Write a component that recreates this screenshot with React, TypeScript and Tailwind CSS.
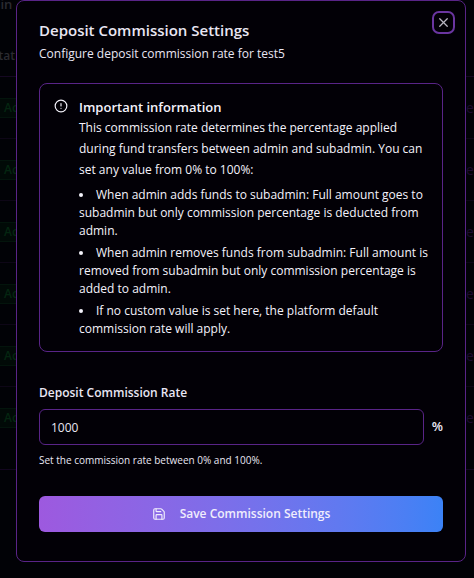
import { useState } from "react";
import { CircleAlert, Save, X } from "lucide-react";

const rows = ["r1", "r2", "r3", "r4", "r5", "r6"];

function SubadminTable() {
  return (
    <div aria-hidden="true" className="min-h-screen overflow-hidden bg-[#010206] text-sm">
      <p className="h-9 -indent-[12px] text-[13px] leading-2 font-semibold text-[#2b2b31]">min</p>
      <table className="w-full table-fixed border-collapse border-b border-[#12061f]">
        <thead>
          <tr className="h-10 border-b border-[#150822]">
            <th className="p-0 text-left -indent-[8px] text-[12px] font-semibold text-[#2b2b31]">Stat</th>
            <th className="w-3 p-0" />
          </tr>
        </thead>
        <tbody>
          {rows.map((row) => (
            <tr key={row} className="h-[62px] border-b border-[#0d0616] last:h-[83px] last:border-b-0">
              <td className="p-0 pt-[21px] align-top">
                <span className="block h-5 w-10 border-y border-[#03140c] bg-[#010a07] pl-1 text-xs leading-[18px] font-semibold text-[#042611]">
                  Active
                </span>
              </td>
              <td className="overflow-hidden p-0 pt-[21px] pl-1 align-top leading-5 text-[#1d0b30]">ers</td>
            </tr>
          ))}
        </tbody>
      </table>
    </div>
  );
}

function InfoAlert() {
  return (
    <div
      role="alert"
      className="mt-[19px] flex gap-[11px] rounded-lg border border-[#592487] py-[13px] pr-3 pl-[14px] text-[#f4f2fb]"
    >
      <CircleAlert className="mt-[2px] size-[14px] shrink-0" strokeWidth={2} />
      <div className="min-w-0 flex-1 text-[12px]">
        <h3 className="text-[13px] leading-5 font-semibold">Important information</h3>
        <p className="leading-[21px]">
          This commission rate determines the percentage applied during fund transfers between admin and subadmin. You
          can set any value from 0% to 100%:
        </p>
        <ul className="mt-[6px] list-inside list-disc space-y-1 leading-[18px]">
          <li>
            When admin adds funds to subadmin: Full amount goes to subadmin but only commission percentage is deducted
            from admin.
          </li>
          <li>
            When admin removes funds from subadmin: Full amount is removed from subadmin but only commission percentage
            is added to admin.
          </li>
          <li>If no custom value is set here, the platform default commission rate will apply.</li>
        </ul>
      </div>
    </div>
  );
}

export default function App() {
  const [rate, setRate] = useState("1000");

  return (
    <div className="relative font-['Open_Sans','Noto_Sans',sans-serif]">
      <SubadminTable />
      <div
        role="dialog"
        aria-labelledby="dialog-title"
        aria-describedby="dialog-description"
        className="absolute top-0 right-2 left-4 rounded-lg border border-[#592487] bg-[#020006] px-[22px] pt-[17px] pb-[29px] text-[#e9e6f3]"
      >
        <button
          type="button"
          aria-label="Close"
          className="absolute top-[10px] right-[10px] flex size-[23px] items-center justify-center rounded-[7px] border-2 border-[#6a35a0] text-[#b9b6c2]"
        >
          <X className="size-[15px] shrink-0" strokeWidth={2} />
        </button>
        <h2 id="dialog-title" className="text-[15px] leading-6 font-semibold">
          Deposit Commission Settings
        </h2>
        <p id="dialog-description" className="mt-[2px] text-[12px] leading-5">
          Configure deposit commission rate for test5
        </p>

        <InfoAlert />

        <form onSubmit={(event) => event.preventDefault()}>
          <label htmlFor="rate" className="mt-[31px] block text-[12px] leading-5 font-semibold">
            Deposit Commission Rate
          </label>
          <div className="mt-[6px] flex items-center gap-2">
            <input
              id="rate"
              type="text"
              inputMode="numeric"
              value={rate}
              aria-describedby="rate-help"
              onChange={(event) => setRate(event.target.value)}
              className="h-9 min-w-0 flex-1 rounded-md border border-[#592487] bg-transparent px-[11px] text-[12px] outline-none"
            />
            <span className="text-[13px] font-semibold">%</span>
          </div>
          <p id="rate-help" className="mt-[7px] text-[10px] leading-4">
            Set the commission rate between 0% and 100%.
          </p>
          <button
            type="submit"
            className="mt-7 flex h-9 w-full items-center justify-center gap-[14px] rounded-md bg-linear-to-r from-[#9d59df] to-[#3b82f6] text-[12px] font-semibold text-[#f0edfc]"
          >
            <Save className="size-[14px]" strokeWidth={2} />
            Save Commission Settings
          </button>
        </form>
      </div>
    </div>
  );
}
